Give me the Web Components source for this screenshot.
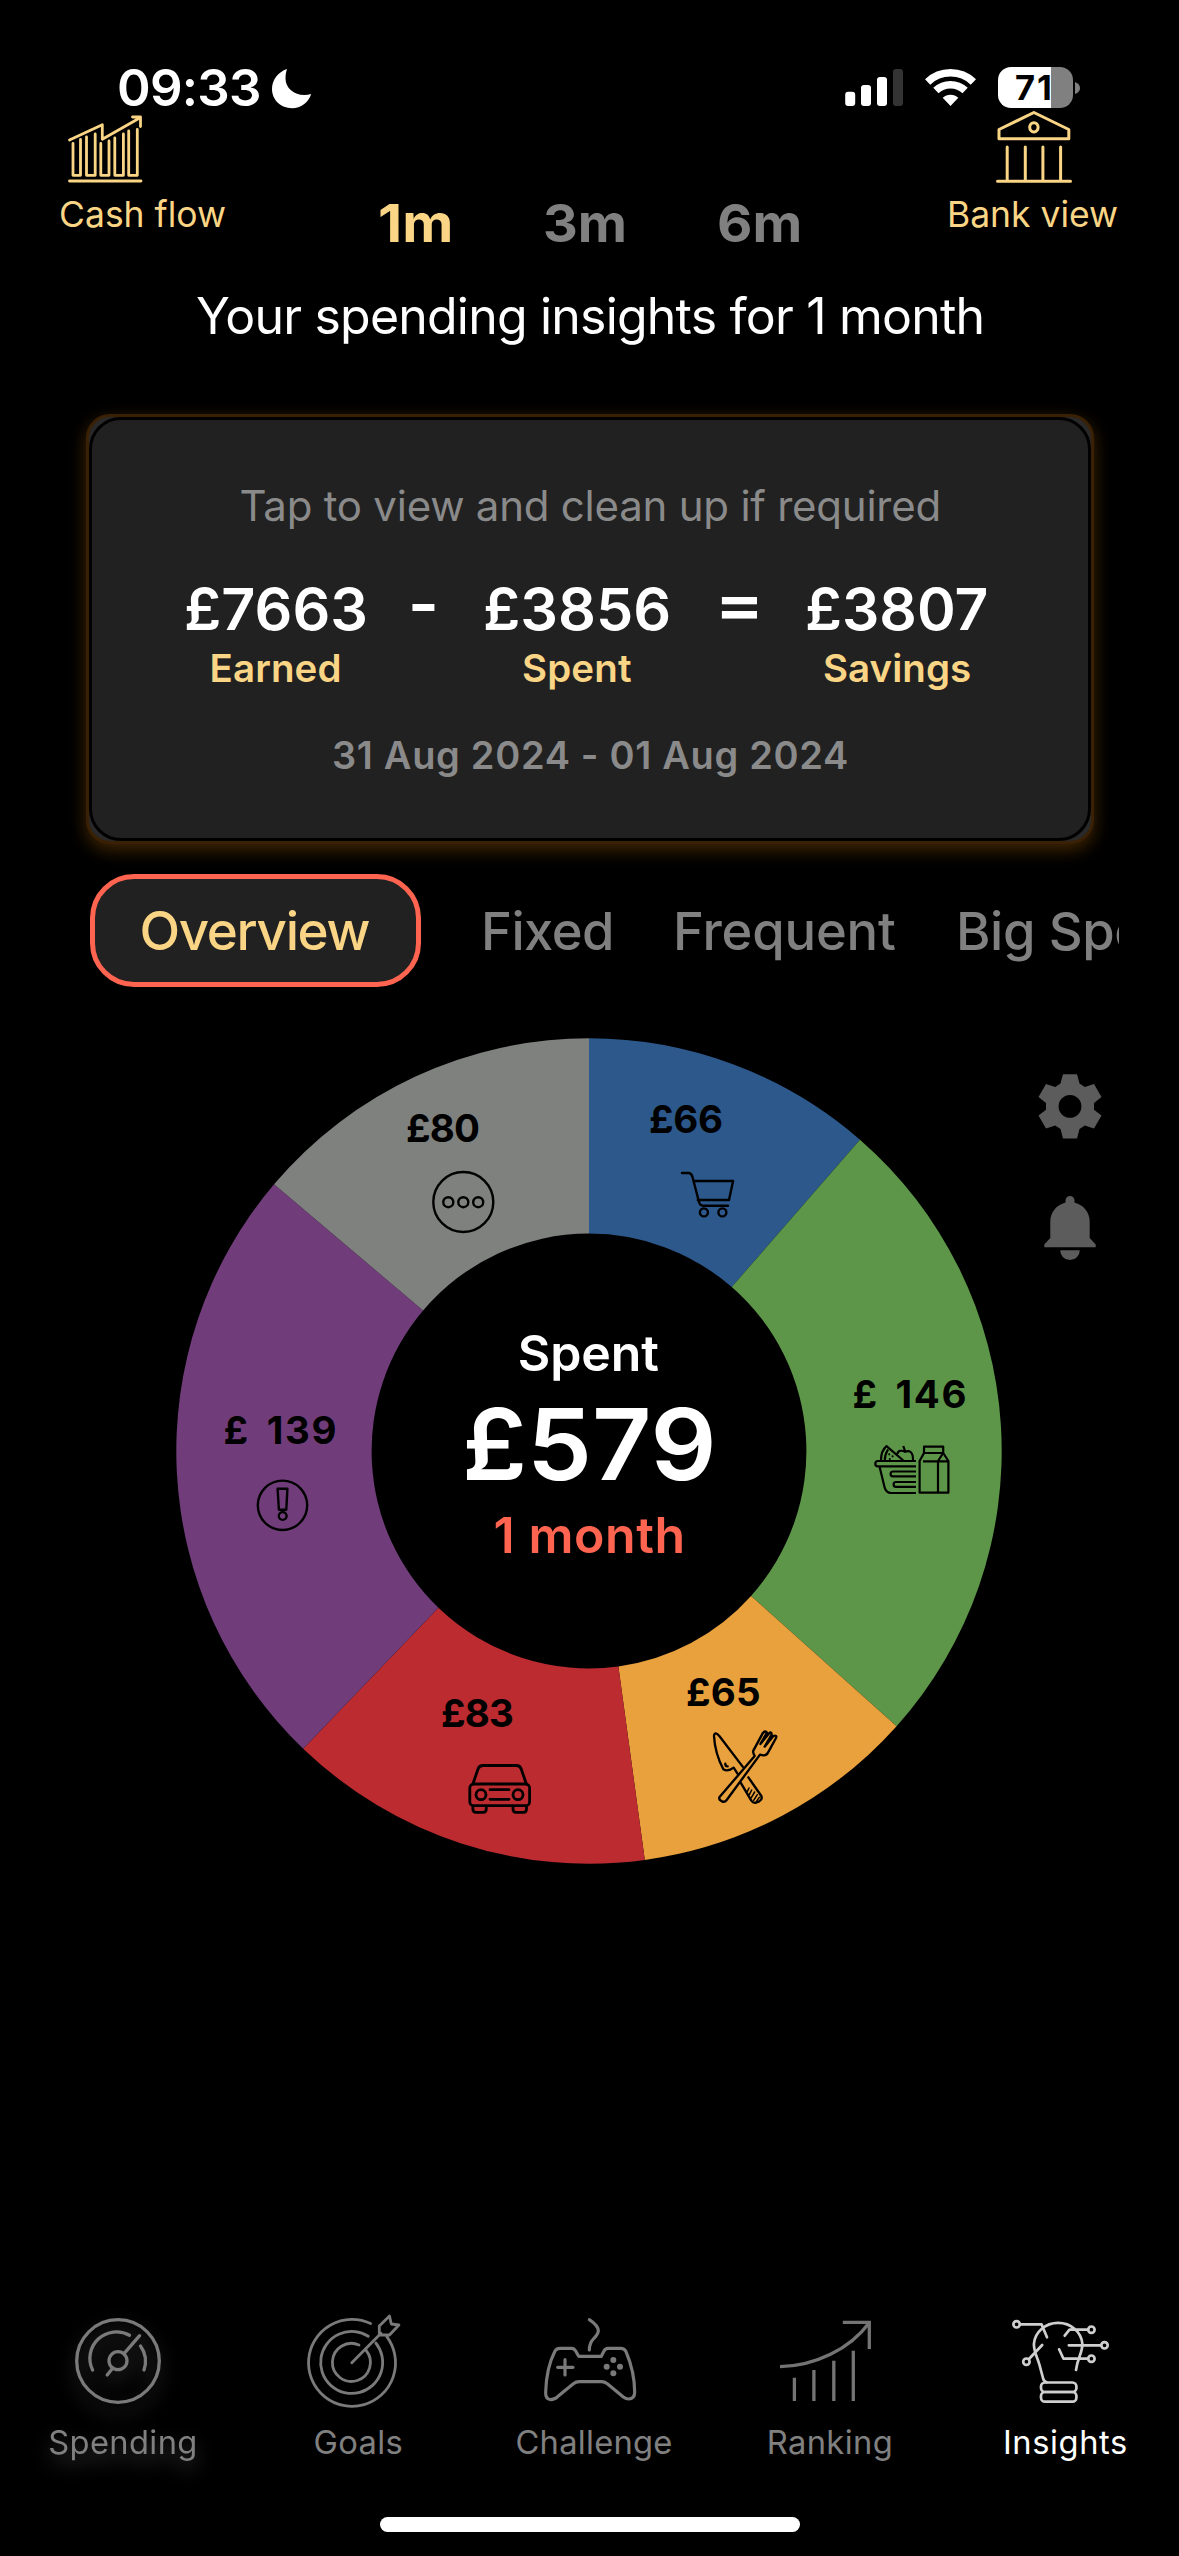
<!DOCTYPE html>
<html lang="en">
<head>
<meta charset="utf-8">
<title>Spending insights</title>
<style>
  html, body { margin: 0; background: #000; }
  body { font-family: Inter, "Liberation Sans", sans-serif; color: #fff; }
</style>
</head>
<body>
<insights-page></insights-page>
<script>
const define = (name, html, setup) => {
  const tpl = document.createElement('template');
  tpl.innerHTML = html.trim();
  customElements.define(name, class extends HTMLElement {
    constructor() {
      super();
      this.attachShadow({ mode: 'open' }).appendChild(tpl.content.cloneNode(true));
    }
    connectedCallback() { if (setup) setup(this, this.shadowRoot); }
  });
};

/* One line of text whose ink fills the width given in "w", by tracking, or by widening
   the glyphs when "wide" is set. Capitals are centred in "h". "ws" widens each space. */
const ctx = document.createElement('canvas').getContext('2d');
define('ink-text', `
  <style>
    :host { display: block; flex: none; }
    span { display: block; white-space: pre; transform-origin: 0 50%; }
  </style><span></span>`, (el, root) => {
  const text = el.getAttribute('text');
  const size = +el.getAttribute('size'), weight = el.getAttribute('weight') || 400;
  const w = +el.getAttribute('w'), h = el.getAttribute('h'), ws = +el.getAttribute('ws') || 0;
  ctx.font = `${weight} ${size}px Inter, "Liberation Sans", sans-serif`;
  const m = ctx.measureText(text);
  const ink = m.actualBoundingBoxLeft + m.actualBoundingBoxRight + ws * (text.split(' ').length - 1);
  const span = root.querySelector('span');
  span.textContent = text;
  let left = m.actualBoundingBoxLeft;
  if (el.hasAttribute('wide')) {
    left *= w / ink;
    span.style.transform = `scaleX(${w / ink})`;
  } else if (text.length > 1) {
    span.style.letterSpacing = (w - ink) / (text.length - 1) + 'px';
  }
  span.style.wordSpacing = ws + 'px';
  span.style.marginLeft = left + 'px';
  el.style.font = `${weight} ${size}px/${h}px Inter, "Liberation Sans", sans-serif`;
  el.style.width = w + 'px';
  el.style.height = h + 'px';
  if (el.hasAttribute('color')) el.style.color = el.getAttribute('color');
});

define('status-bar', `
  <style>
    :host { display: flex; box-sizing: border-box; height: 111px; padding: 67px 98px 0 119px; align-items: flex-start; }
    svg { display: block; }
    .moon { margin-left: 12px; }
    .right { margin-left: auto; display: flex; align-items: flex-start; }
    .bat { margin-left: 20px; display: flex; align-items: center; }
    .cell { width: 75px; height: 41px; border-radius: 13px; display: flex; align-items: center; box-sizing: border-box;
            padding-left: 18px; background: linear-gradient(90deg, #fff 53px, #808080 53px); }
    .nub { margin-left: 2px; }
  </style>
  <ink-text text="09:33" size="51" weight="600" w="140" h="42"></ink-text>
  <svg class="moon" width="42" height="42" viewBox="271 67 42 42"><path fill="#fff" d="M287 69C278 72 272 80 272 89C272 100 281 108.200 292 108.200C301 108.200 308.500 102.500 311.200 94C298 98 285.500 90 285.500 78.500C285.500 75 286 72 287 69Z"/></svg>
  <div class="right">
    <svg width="133" height="42" viewBox="846 67 133 42">
      <g fill="#fff"><rect x="846.200" y="91.700" width="10" height="14.300" rx="3"/><rect x="862" y="85" width="10" height="21" rx="3"/><rect x="878" y="77" width="10" height="29" rx="3"/><rect x="894" y="69" width="10" height="37" rx="3" fill="#333"/>
      <path d="M951.500 106L943.700 97.800A11.300 11.300 0 0 1 959.300 97.800Z"/></g>
      <g fill="none" stroke="#fff" stroke-width="7.600"><path d="M928.650 81.900A33.200 33.200 0 0 1 974.350 81.900"/><path d="M936.900 90.600A21.200 21.200 0 0 1 966.100 90.600"/></g>
    </svg>
    <div class="bat">
      <div class="cell"><ink-text text="71" size="34.500" weight="700" w="34" h="41" color="#000"></ink-text></div>
      <svg class="nub" width="6" height="14" viewBox="0 0 6 14"><path d="M0 1Q5 3 5 7T0 13Z" fill="#808080"/></svg>
    </div>
  </div>`);

define('top-nav', `
  <style>
    :host { display: flex; height: 175px; box-sizing: border-box; padding: 0 62px 0 61px; align-items: flex-start; --gold: #fad585; }
    svg { display: block; fill: none; stroke: var(--gold); stroke-width: 3; stroke-linecap: round; stroke-linejoin: round; }
    .item { display: flex; flex-direction: column; gap: 11px; color: var(--gold); }
    .item.right { margin-left: auto; align-items: center; }
    .periods { display: flex; gap: 95px; margin: 87px 0 0 155px; color: #808080; }
  </style>
  <div class="item">
    <svg width="90" height="73" viewBox="61 111 90 73"><path stroke-width="2.800" d="M69.500 181H141M73 143.500V175.300H80.500V139.500M86.500 137V175.300H95.200V134M100.800 143.500V175.300H109V141M114.800 138V175.300H123.400V134M128.700 131V175.300H137.300V129.500M69.500 140L102.300 124.700V139.300L140.500 117.500M132.500 117H140.500V126.500"/></svg>
    <ink-text text="Cash flow" size="35.500" w="164" h="40"></ink-text>
  </div>
  <div class="periods">
    <ink-text wide text="1m" size="52.500" weight="700" w="70" h="50" color="#fad585"></ink-text>
    <ink-text wide text="3m" size="52.500" weight="700" w="79" h="50"></ink-text>
    <ink-text wide text="6m" size="52.500" weight="700" w="80" h="50"></ink-text>
  </div>
  <div class="item right">
    <svg width="90" height="73" viewBox="988 111 90 73"><path d="M1032.900 112.500L998 129.500V138.700H1067.800V129.500ZM996.500 181.300H1069.500M1006.200 147V180M1024.300 147V180M1041.900 147V180M1059.600 147V180"/><ellipse cx="1032.900" cy="127.300" rx="4.200" ry="4.600"/></svg>
    <ink-text text="Bank view" size="35.500" w="167" h="40"></ink-text>
  </div>`);

define('summary-card', `
  <style>
    :host { display: block; margin: 68px 85px 0 86px; height: 430px; box-sizing: border-box; border: 3px solid #3a2105; border-radius: 24px;
            background: #292929; box-shadow: 0 6px 17px rgba(255, 150, 10, .26); }
    .in { box-sizing: border-box; height: 424px; border: 3px solid #000; border-radius: 32px; background: #212121; padding-top: 61px;
          display: flex; flex-direction: column; align-items: center; color: #8a8a8a; }
    .row { display: flex; align-self: stretch; margin: 50px 0 47px 94px; color: #fff; }
    .col { display: flex; flex-direction: column; align-items: center; gap: 11px; }
    .m { margin-left: 47px; margin-top: -6px; } .e { margin-left: 52px; margin-top: -6px; }
    .s { margin-left: 51px; } .v { margin-left: 50px; }
  </style>
  <div class="in">
    <ink-text text="Tap to view and clean up if required" size="42" w="697" h="50"></ink-text>
    <div class="row">
      <div class="col"><ink-text wide text="£7663" size="58" weight="600" w="179" h="56"></ink-text><ink-text text="Earned" size="38.500" weight="600" w="128" h="40" color="#fad585"></ink-text></div>
      <ink-text class="m" wide text="-" size="60" weight="700" w="22" h="56"></ink-text>
      <div class="col s"><ink-text wide text="£3856" size="58" weight="600" w="184" h="56"></ink-text><ink-text text="Spent" size="38.500" weight="600" w="108" h="40" color="#fad585"></ink-text></div>
      <ink-text class="e" wide text="=" size="60" weight="700" w="36" h="56"></ink-text>
      <div class="col v"><ink-text wide text="£3807" size="58" weight="600" w="180" h="56"></ink-text><ink-text text="Savings" size="38.500" weight="600" w="146" h="40" color="#fad585"></ink-text></div>
    </div>
    <ink-text text="31 Aug 2024 - 01 Aug 2024" size="38" weight="600" w="514" h="40"></ink-text>
  </div>`);

define('category-tabs', `
  <style>
    :host { display: flex; margin: 30px 60px 0 90px; height: 113px; align-items: center; overflow: hidden; color: #808080; }
    .on { box-sizing: border-box; flex: none; width: 331px; height: 113px; border: 5px solid #ff6450; border-radius: 44px; background: #212121;
          display: flex; align-items: center; justify-content: center; margin-right: 64px; }
    .f { margin-right: 66px; } .q { margin-right: 65px; }
  </style>
  <div class="on"><ink-text text="Overview" size="53" weight="500" w="228" h="60" color="#fad585"></ink-text></div>
  <ink-text class="f" text="Fixed" size="52.500" weight="500" w="126" h="60"></ink-text>
  <ink-text class="q" text="Frequent" size="52.500" weight="500" w="218" h="60"></ink-text>
  <ink-text text="Big Spend" size="52.500" weight="500" w="245" h="60"></ink-text>`);

/* Donut: slices come from "values" and "colors"; the slotted pins lie over it. */
define('donut-chart', `
  <style>
    :host { display: block; position: relative; flex: none; width: 826px; height: 826px; }
    svg { display: block; }
    .mid { position: absolute; inset: 0; padding-bottom: 14px; display: flex; flex-direction: column; align-items: center; justify-content: center; gap: 16px; }
  </style>
  <svg width="826" height="826" viewBox="-413 -413 826 826"></svg>
  <div class="mid"><slot name="center"></slot></div>
  <slot></slot>`, (el, root) => {
  const v = el.getAttribute('values').split(',').map(Number), c = el.getAttribute('colors').split(',');
  const sum = v.reduce((a, b) => a + b), R = 412.7, r = 217.4;
  let a = 0, out = '';
  const p = (q, t) => (q * Math.sin(t)).toFixed(2) + ' ' + (-q * Math.cos(t)).toFixed(2);
  v.forEach((x, i) => {
    const b = a + x / sum * 2 * Math.PI;
    out += `<path fill="${c[i]}" d="M${p(R, a)}A${R} ${R} 0 0 1 ${p(R, b)}L${p(r, b)}A${r} ${r} 0 0 0 ${p(r, a)}Z"/>`;
    a = b;
  });
  root.querySelector('svg').innerHTML = out;
});

/* A pin over the donut: x and y are screen coordinates of its top left corner. */
define('chart-pin', `
  <style>
    :host { position: absolute; color: #000; }
    ::slotted(svg) { display: block; fill: none; stroke: #000; stroke-width: 2.400; stroke-linecap: round; stroke-linejoin: round; }
  </style><slot></slot>`, el => {
  el.style.left = +el.getAttribute('x') - 176 + 'px';
  el.style.top = +el.getAttribute('y') - 1038 + 'px';
});

define('side-tools', `
  <style>
    :host { display: flex; flex-direction: column; align-items: center; gap: 55px; margin-left: 36px; padding-top: 35px; }
    svg { display: block; fill: #5c5c5c; }
  </style>
  <svg width="64" height="67" viewBox="1038.500 1073 64 67"><path fill-rule="evenodd" d="M1063.500 1074.300H1077.500L1080 1083.500 1085.300 1087 1094.500 1084 1102 1097 1094.500 1103V1109.700L1102 1115.500 1094.500 1128.600 1085.300 1125.600 1080 1129 1077.500 1138.400H1063.500L1061 1129 1055.700 1125.600 1046.500 1128.600 1039 1115.500 1046.500 1109.700V1103L1039 1097 1046.500 1084 1055.700 1087 1061 1083.500ZM1070.500 1095A11.400 11.400 0 1 0 1070.500 1117.800A11.400 11.400 0 1 0 1070.500 1095Z"/></svg>
  <svg width="64" height="66" viewBox="1038.500 1195 64 66"><path d="M1066 1202.500V1200.500A4.500 4.500 0 0 1 1075 1200.500V1202.500C1084 1205 1090.200 1212 1090.200 1221.500V1238L1096.200 1244.500V1247.300H1044.800V1244.500L1050.800 1238V1221.500C1050.800 1212 1057 1205 1066 1202.500ZM1060.700 1250.300H1080.300A9.800 9.800 0 0 1 1060.700 1250.300Z"/></svg>`);

define('nav-item', `
  <style>
    :host { display: flex; flex-direction: column; align-items: center; gap: 7.500px; color: #808080; --ink: #7a7a7a; }
    :host([active]) { color: #fff; --ink: #cfcfcf; }
    :host([glow]) { filter: drop-shadow(0 9px 9px rgba(255, 255, 255, .22)); }
    ::slotted(svg) { display: block; fill: none; stroke: var(--ink); stroke-width: 3.300; stroke-linecap: round; stroke-linejoin: round; }
  </style><slot></slot>`);

define('bottom-nav', `
  <style>
    :host { display: block; margin-top: auto; }
    .row { display: grid; grid-template-columns: repeat(5, 235.800px); padding-left: 4.400px; height: 211px; }
    .home { width: 420px; height: 15px; border-radius: 8px; background: #fff; margin: 0 auto 24px; }
  </style>
  <div class="row">
    <nav-item glow>
      <svg width="120" height="110" viewBox="62 2306 120 110"><circle cx="118" cy="2361" r="41.300"/><circle cx="118" cy="2360.700" r="9"/><path d="M92.600 2370A26.500 26.500 0 0 1 129.500 2335.300M140.500 2346A26.500 26.500 0 0 1 144 2370M139.600 2335.700L123.800 2353.800M112.800 2368L107.200 2375"/></svg>
      <ink-text text="Spending" size="32.700" w="146" h="36"></ink-text>
    </nav-item>
    <nav-item>
      <svg width="120" height="110" viewBox="298 2306 120 110" style="stroke-width:2.800"><path d="M370.600 2323.500A43.500 43.500 0 1 0 386.800 2336.700M368.300 2336.300A31 31 0 1 0 375.800 2343M359 2345A19 19 0 1 0 366.200 2350.500M351.800 2362.700L381 2333.300M379.300 2335V2326L389.500 2316 391.300 2324 398.900 2325 389.500 2335Z"/></svg>
      <ink-text text="Goals" size="32.700" w="87" h="36"></ink-text>
    </nav-item>
    <nav-item>
      <svg width="120" height="110" viewBox="534 2306 120 110"><g transform="translate(530 2305) scale(.33333)" stroke-width="9.500"><path d="M75 138Q80 130 90 130H125Q132 130 137 138L146 154H214L222 138Q226 130 234 130H272Q283 130 288 140C305 180 314 220 314 262Q314 282 296 282Q288 282 280 276L232 236Q224 230 214 230H148Q138 230 130 236L84 274Q74 284 62 284Q46 282 47 262C48 220 56 175 75 138ZM105 164V210M83 187H129M178 44Q205 62 205 78Q204 88 190 102Q178 115 178 135"/><g fill="#7a7a7a" stroke="none"><circle cx="250" cy="165" r="9"/><circle cx="230" cy="185" r="9"/><circle cx="270" cy="185" r="9"/><circle cx="250" cy="205" r="9"/></g></g></svg>
      <ink-text text="Challenge" size="32.700" w="155" h="36"></ink-text>
    </nav-item>
    <nav-item>
      <svg width="120" height="110" viewBox="770 2306 120 110" style="stroke-linecap:butt;stroke-linejoin:miter;stroke:#747474"><path d="M780 2366.700C815 2366 850 2349 869 2323M842.800 2322.300H869.300V2349M794.400 2377.700V2401M813.900 2370V2401M833.800 2360.700V2401M853.300 2350.700V2401"/></svg>
      <ink-text text="Ranking" size="32.700" w="122" h="36"></ink-text>
    </nav-item>
    <nav-item active>
      <svg width="120" height="110" viewBox="1005.500 2306 120 110" style="stroke-width:2.700"><path d="M1076.500 2370C1078 2358 1082.900 2353 1082.900 2344A24.300 22.500 0 0 0 1034.400 2344C1034.400 2353 1038 2357 1040 2365L1043.500 2378Q1044 2381 1047 2382.300M1020.500 2324.300H1042L1047.500 2337.300M1088.500 2329.700H1070L1065.200 2335.700M1101.500 2345.300H1069.300M1088.500 2358.700H1064L1059.600 2349.300M1029.500 2359L1042.700 2345"/><rect x="1041.500" y="2382.500" width="35.400" height="9.500" rx="4"/><rect x="1041.500" y="2392" width="35.400" height="9.700" rx="4"/><circle cx="1017.100" cy="2324.300" r="3.200"/><circle cx="1091.900" cy="2329.700" r="3.200"/><circle cx="1105" cy="2345.300" r="3.200"/><circle cx="1091.900" cy="2358.700" r="3.200"/><circle cx="1026.900" cy="2361.700" r="3.200"/></svg>
      <ink-text text="Insights" size="32.700" w="121" h="36"></ink-text>
    </nav-item>
  </div>
  <div class="home"></div>`);

define('insights-page', `
  <style>
    :host { display: flex; flex-direction: column; width: 1179px; height: 2556px; overflow: hidden; background: #000; }
    .title { margin-left: 197px; }
    .chart { display: flex; align-items: flex-start; padding: 51px 0 0 176px; }
  </style>
  <status-bar></status-bar>
  <top-nav></top-nav>
  <ink-text class="title" text="Your spending insights for 1 month" size="50" w="784.500" h="60"></ink-text>
  <summary-card></summary-card>
  <category-tabs></category-tabs>
  <div class="chart">
    <donut-chart values="66,146,65,83,139,80" colors="#2d588b,#5d9648,#e8a13d,#bb2b30,#703d7a,#7f817f">
      <ink-text slot="center" text="Spent" size="50" weight="600" w="138.500" h="60"></ink-text>
      <ink-text slot="center" wide text="£579" size="99" weight="600" w="246" h="90"></ink-text>
      <ink-text slot="center" text="1 month" size="50" weight="600" w="187" h="60" color="#ff6450"></ink-text>

      <chart-pin x="650" y="1099"><ink-text text="£66" size="38.500" weight="700" w="72" h="40"></ink-text></chart-pin>
      <chart-pin x="679" y="1168"><svg width="58" height="54" viewBox="679 1168 58 54"><path d="M682 1173H688.500Q691.500 1173 692.500 1177L699 1202Q700 1205.700 703 1205.700H728M694 1181H733.100L729 1200H697.800"/><circle cx="703.900" cy="1212.400" r="4"/><circle cx="722.400" cy="1212.400" r="4"/></svg></chart-pin>

      <chart-pin x="853.500" y="1374"><ink-text text="£ 146" size="38.500" weight="700" w="112" h="40" ws="6"></ink-text></chart-pin>
      <chart-pin x="872" y="1440"><svg width="82" height="58" viewBox="872 1440 82 58" style="stroke-linecap:butt;stroke-width:2.200"><path d="M916 1461H878A2.700 2.700 0 0 0 878 1466.400H916M879.500 1466.400L884.500 1487Q886 1493 891 1493H916M916 1471.500H893A2.400 2.400 0 0 0 893 1476.300H916M916 1482H896A2.400 2.400 0 0 0 896 1486.800H916M903.300 1460.500L886.500 1446.200C882 1450 881 1455 881 1460.500M884.800 1460.500C884.800 1456 885.800 1453 888 1449.500M897.400 1454C897.800 1450.500 901.500 1450 905 1451.800C909 1449.800 913.300 1451.500 913 1460.500M903.300 1446L905 1451M924 1446.700H943.200V1453H924ZM924 1453L919.600 1461V1492.700H948.400V1461L943.200 1453L938 1461V1492.700M923 1461.300H948"/><g fill="#000" stroke="none"><circle cx="889.200" cy="1454.300" r="1.100"/><circle cx="892.600" cy="1456.300" r="1.100"/><circle cx="889.800" cy="1459" r="1.100"/></g></svg></chart-pin>

      <chart-pin x="687" y="1672"><ink-text text="£65" size="38.500" weight="700" w="72" h="40"></ink-text></chart-pin>
      <chart-pin x="700" y="1720"><svg width="90" height="90" viewBox="0 0 270 270"><g stroke-width="7"><path d="M42 48Q44 32 58 48L128 140M42 48C44 85 58 125 70 148Q84 156 101 143L112 160M76 131Q76 139 83 139M145 172L184 228Q188 238 178 244L168 248Q160 250 154 242L122 188M58 232L164 108Q158 98 160 92L188 40Q196 30 201 38L181 72L209 38Q215 36 215 44L194 80L220 48Q232 44 228 54L204 98Q199 107 190 106L180 104L80 240Q74 248 66 244Q56 240 58 232Z"/><path stroke-width="4.500" d="M142 214L147 204M148 224L155 210M154 233L164 216M161 241L172 224M169 245L178 232"/></g></svg></chart-pin>

      <chart-pin x="442" y="1693"><ink-text text="£83" size="38.500" weight="700" w="71" h="40"></ink-text></chart-pin>
      <chart-pin x="465" y="1760"><svg width="70" height="58" viewBox="465 1760 70 58" style="stroke-width:2.800"><rect x="469.800" y="1784" width="59.800" height="21.700" rx="4"/><path d="M473 1783.700L478 1769Q479.300 1765.500 483 1765.500H516.500Q520 1765.500 521.200 1769L526.300 1783.700M490 1789.700H509M490 1799.300H509M472.900 1806.500V1809Q472.900 1812.300 476 1812.300H483Q486.300 1812.300 486.300 1809V1806.500M513 1806.500V1809Q513 1812.300 516 1812.300H523.500Q526.500 1812.300 526.500 1809V1806.500"/><circle cx="481" cy="1794.700" r="5"/><circle cx="518" cy="1794.700" r="5"/></svg></chart-pin>

      <chart-pin x="224.500" y="1410"><ink-text text="£ 139" size="38.500" weight="700" w="111" h="40" ws="6"></ink-text></chart-pin>
      <chart-pin x="255" y="1478"><svg width="55" height="55" viewBox="255 1478 55 55"><circle cx="282.500" cy="1505.300" r="24.700"/><path d="M277.600 1488.700H287.400L286.300 1509.700H278.900Z"/><circle cx="282.700" cy="1516" r="3.900"/></svg></chart-pin>

      <chart-pin x="407" y="1107.500"><ink-text text="£80" size="38.500" weight="700" w="72" h="40"></ink-text></chart-pin>
      <chart-pin x="430" y="1169"><svg width="66" height="66" viewBox="430 1169 66 66"><circle cx="463.300" cy="1202" r="30"/><circle cx="448.300" cy="1202.200" r="5"/><circle cx="463.300" cy="1202.200" r="5"/><circle cx="478.200" cy="1202.200" r="5"/></svg></chart-pin>
    </donut-chart>
    <side-tools></side-tools>
  </div>
  <bottom-nav></bottom-nav>`);
</script>
</body>
</html>
